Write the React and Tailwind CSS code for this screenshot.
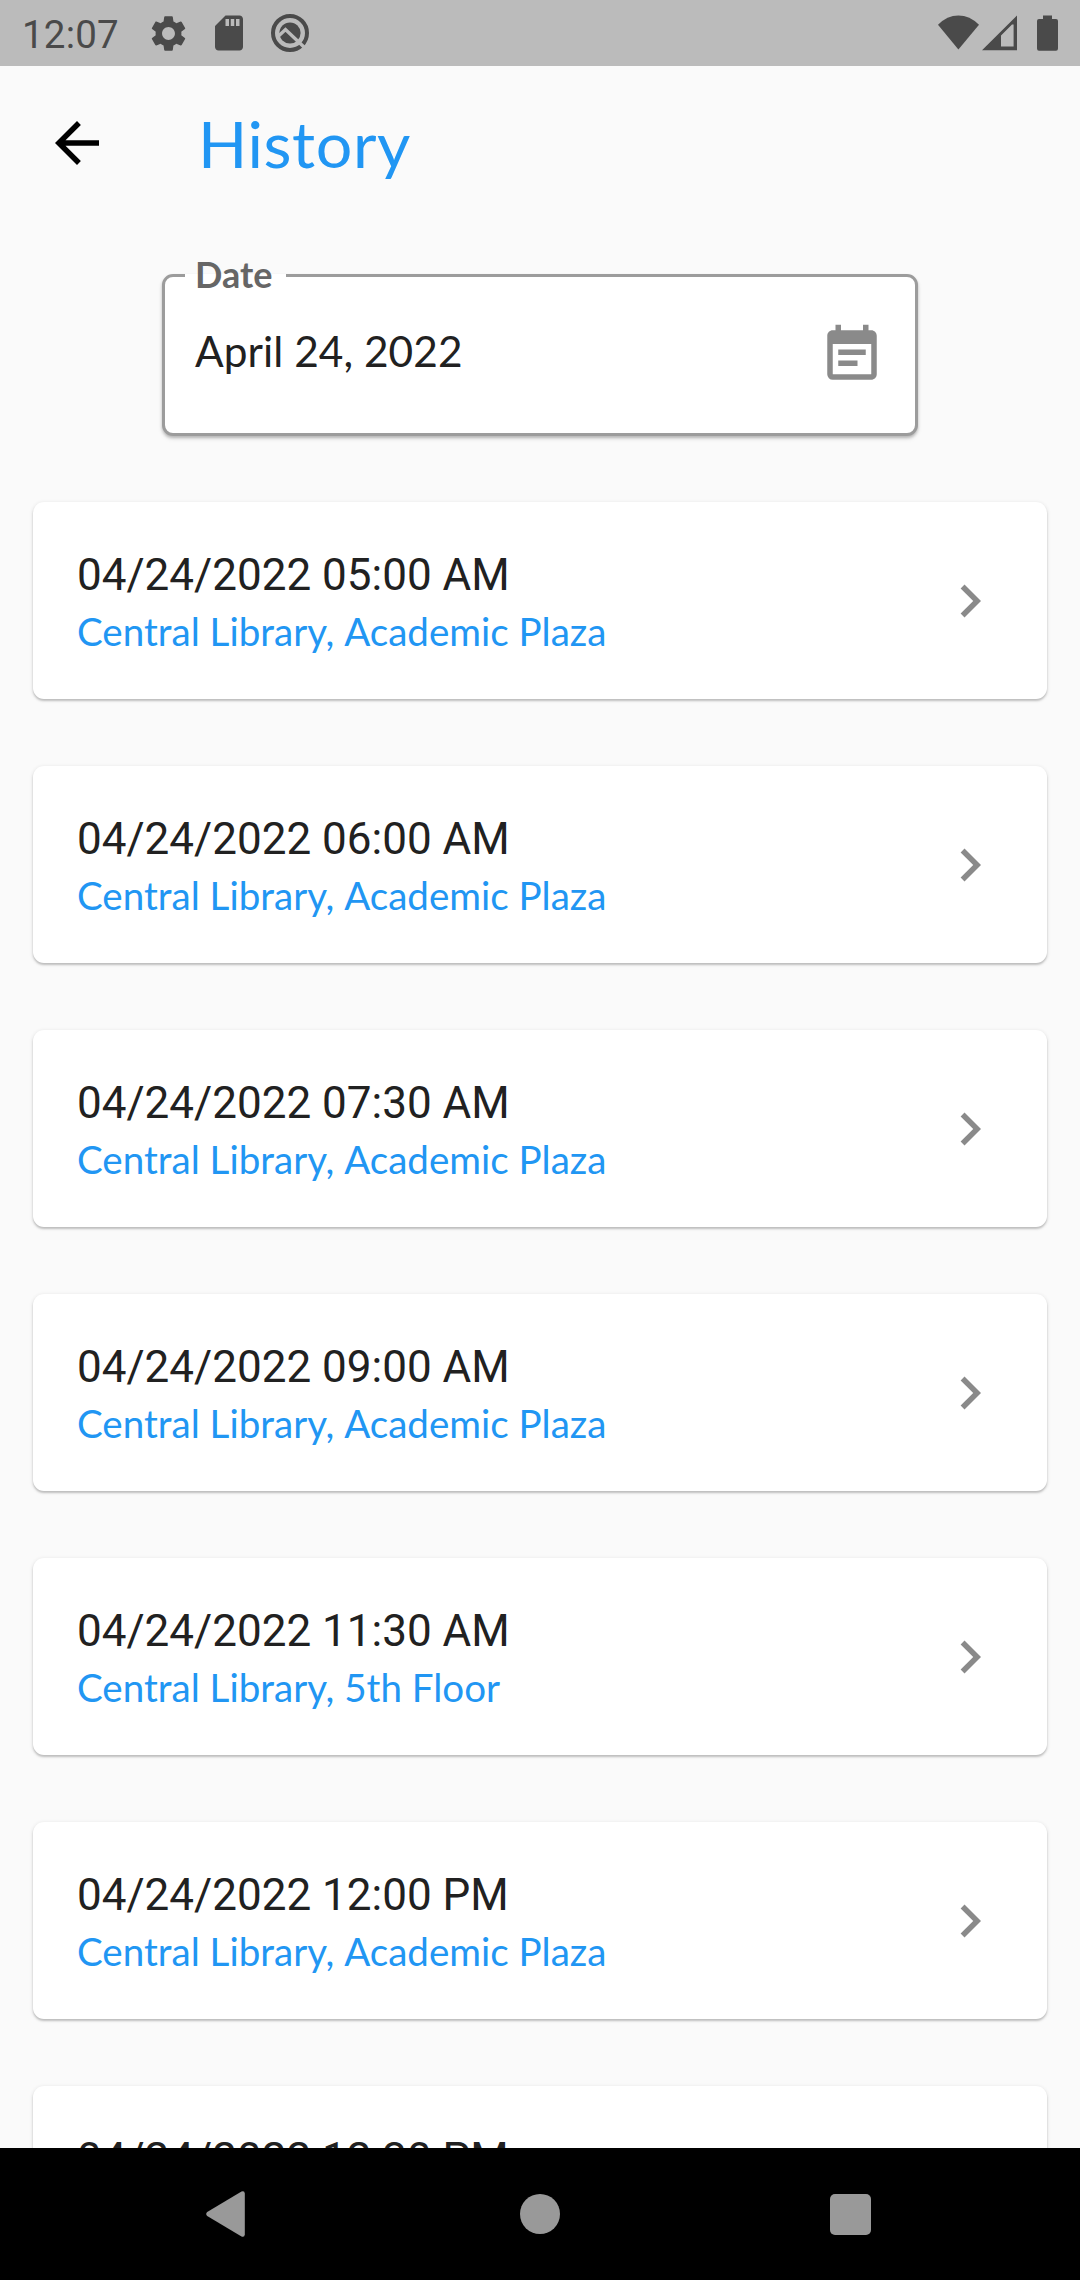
import React from 'react';
import { MdSettings, MdSdStorage, MdArrowBack, MdEventNote, MdChevronRight } from 'react-icons/md';

const entries = [
  ['04/24/2022 05:00 AM', 'Central Library,', 'Academic Plaza'],
  ['04/24/2022 06:00 AM', 'Central Library,', 'Academic Plaza'],
  ['04/24/2022 07:30 AM', 'Central Library,', 'Academic Plaza'],
  ['04/24/2022 09:00 AM', 'Central Library,', 'Academic Plaza'],
  ['04/24/2022 11:30 AM', 'Central Library,', '5th Floor'],
  ['04/24/2022 12:00 PM', 'Central Library,', 'Academic Plaza'],
  ['04/24/2022 12:30 PM', '', ''],
];

function StatusBar() {
  return (
    <header className="flex h-[66px] shrink-0 items-center bg-[#bbbbbb] pl-[22px] text-[#4a4a4a]">
      <span className="w-[125px] pt-[3px] font-[Roboto,sans-serif] text-[38.5px] leading-[44px] tracking-[0.2px]">12:07</span>
      <MdSettings className="size-[43px]" />
      <MdSdStorage className="ml-[18px] size-[42px]" />
      <svg className="ml-[19px] size-[42px]" viewBox="-21 -21 42 42" fill="none">
        <circle r="17" stroke="currentColor" strokeWidth="4" />
        <circle r="10.6" fill="currentColor" />
        <path d="M-12 3.5L-4.5 -3.5L15 15" stroke="#bbbbbb" strokeWidth="3.4" />
      </svg>
      <div className="ml-auto flex pr-[22px]">
        <svg className="h-[36px] w-[41px]" viewBox="0 0 41 36" fill="currentColor">
          <path d="M20.4 34.5L0 9.8Q9 .5 20.4 .5T41 9.8Z" />
        </svg>
        <svg className="ml-[3px] h-[36px] w-[35px]" viewBox="0 0 35 36" fill="currentColor" fillRule="evenodd">
          <path d="M0 35.2L35 .4V35.2ZM19 20.5V31.5H31.6V9.5H30Z" />
        </svg>
        <svg className="ml-[20px] h-[36px] w-[21px]" viewBox="0 0 21 36" fill="currentColor">
          <path d="M6 .5H15V4H19Q21 4 21 6V33.5Q21 35.7 19 35.7H2Q0 35.7 0 33.5V6Q0 4 2 4H6Z" />
        </svg>
      </div>
    </header>
  );
}

function DateField() {
  return (
    <div className="relative ml-[162px] mt-[54px] flex h-[162px] w-[756px] shrink-0 justify-between rounded-[11px] border-[3px] border-[#9c9c9c] bg-white pl-[30px] pr-[30px] shadow-[0_2px_3px_rgba(0,0,0,0.22),0_3px_5px_rgba(0,0,0,0.08)]">
      <div className="absolute -top-[3px] left-[20px] flex h-[3px] w-[101px] items-center bg-white pl-[10px]">
        <span className="pb-[4px] font-[Lato,sans-serif] text-[36px] font-bold leading-[44px] text-[#666666]">Date</span>
      </div>
      <span className="pt-[49px] font-[Lato,sans-serif] text-[42.4px] leading-[50px] tracking-[0.05px] text-[#212121]">April 24, 2022</span>
      <MdEventNote className="mt-[45px] size-[66px] text-[#8a8a8a]" />
    </div>
  );
}

function EntryCard({ time, building, spot }) {
  return (
    <li className="flex h-[197px] shrink-0 items-center justify-between rounded-[11px] bg-white px-[44px] shadow-[0_2px_2px_rgba(0,0,0,0.18),0_1px_4px_rgba(0,0,0,0.12)]">
      <div className="flex h-full flex-col gap-[4px] pt-[47px]">
        <span className="font-[Roboto,sans-serif] text-[44px] leading-[52px] text-[#212121]">{time}</span>
        <p className="font-[Lato,sans-serif] text-[38.55px] leading-[52px] text-[#2196f3]">
          {building} <span className="inline-block">{spot}</span>
        </p>
      </div>
      <MdChevronRight className="size-[66px] text-[#8a8a8a]" />
    </li>
  );
}

function NavBar() {
  return (
    <nav className="flex h-[132px] shrink-0 items-center bg-black pl-[206px] text-[#999999]">
      <svg className="h-[46px] w-[39px]" viewBox="0 0 39 46" fill="currentColor">
        <path d="M35.5 .6Q38.6 -.5 38.8 2.5V43.5Q38.6 46.5 35.5 45.4L1.2 25Q-.8 23 1.2 21Z" />
      </svg>
      <span className="ml-[275px] size-[40px] rounded-full bg-[#999999]" />
      <span className="ml-[270px] size-[41px] rounded-[5px] bg-[#999999]" />
    </nav>
  );
}

export default function App() {
  return (
    <div className="flex h-[2280px] w-[1080px] flex-col overflow-hidden bg-[#fafafa]">
      <StatusBar />
      <div className="flex h-[154px] shrink-0 items-center pl-[44px]">
        <MdArrowBack className="size-[66px] text-black" />
        <h1 className="ml-[88px] font-[Lato,sans-serif] text-[64.6px] leading-[77px] tracking-[0.6px] text-[#2196f3]">History</h1>
      </div>
      <DateField />
      <main className="flex-1 overflow-hidden px-[33px] pt-[66px]">
        <ul className="flex flex-col gap-[67px]">
          {entries.map(([time, building, spot]) => (
            <EntryCard key={time} time={time} building={building} spot={spot} />
          ))}
        </ul>
      </main>
      <NavBar />
    </div>
  );
}
